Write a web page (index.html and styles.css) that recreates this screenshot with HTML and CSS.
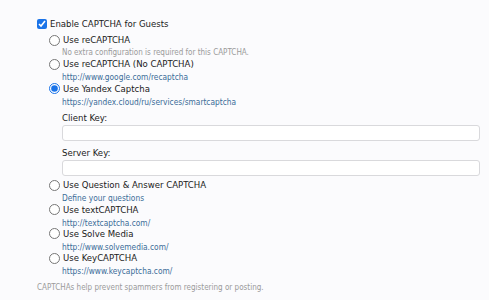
FILE: index.html
```html
<!DOCTYPE html>
<html lang="en">
<head>
  <meta charset="UTF-8">
  <title>CAPTCHA settings</title>
  <link rel="stylesheet" href="styles.css">
</head>
<body>
  <div class="captcha-settings">
    <label class="check-row">
      <input type="checkbox" checked> Enable CAPTCHA for Guests
    </label>

    <div class="options">
      <div class="option">
        <label class="option-label"><input type="radio" name="captcha"> Use reCAPTCHA</label>
        <div class="desc hint">No extra configuration is required for this CAPTCHA.</div>
      </div>
      <div class="option">
        <label class="option-label"><input type="radio" name="captcha"> Use reCAPTCHA (No CAPTCHA)</label>
        <div class="desc"><a href="#">http://www.google.com/recaptcha</a></div>
      </div>
      <div class="option">
        <label class="option-label"><input type="radio" name="captcha" checked> Use Yandex Captcha</label>
        <div class="desc"><a href="#">https://yandex.cloud/ru/services/smartcaptcha</a></div>
        <div class="keys">
          <label class="key-label">Client Key:</label>
          <input type="text" class="key-input">
          <label class="key-label second">Server Key:</label>
          <input type="text" class="key-input">
        </div>
      </div>
      <div class="option">
        <label class="option-label"><input type="radio" name="captcha"> Use Question &amp; Answer CAPTCHA</label>
        <div class="desc"><a href="#">Define your questions</a></div>
      </div>
      <div class="option">
        <label class="option-label"><input type="radio" name="captcha"> Use textCAPTCHA</label>
        <div class="desc"><a href="#">http://textcaptcha.com/</a></div>
      </div>
      <div class="option">
        <label class="option-label"><input type="radio" name="captcha"> Use Solve Media</label>
        <div class="desc"><a href="#">http://www.solvemedia.com/</a></div>
      </div>
      <div class="option">
        <label class="option-label"><input type="radio" name="captcha"> Use KeyCAPTCHA</label>
        <div class="desc"><a href="#">https://www.keycaptcha.com/</a></div>
      </div>
    </div>

    <div class="footer-hint">CAPTCHAs help prevent spammers from registering or posting.</div>
  </div>
</body>
</html>
```

FILE: styles.css
```css
* {
  box-sizing: border-box;
}

body {
  margin: 0;
  background-color: #fbfbfd;
  font-family: "DejaVu Sans Condensed", "DejaVu Sans", sans-serif;
  font-size: 9.5px;
  color: #1a1a1a;
}

.captcha-settings {
  padding: 17px 0 0 37px;
}

.check-row {
  display: flex;
  align-items: center;
  height: 14px;
  line-height: 14px;
}

.check-row input {
  width: 10px;
  height: 10px;
  margin: 0 3px 0 0;
  accent-color: #1a73e8;
}

.options {
  margin-top: 2px;
  padding-left: 12px;
}

.option {
  padding-bottom: 0.1px;
}

.option-label {
  display: flex;
  align-items: center;
  height: 14px;
  line-height: 14px;
}

.option-label input {
  width: 11px;
  height: 11px;
  margin: 0 3px 0 0;
  accent-color: #1a73e8;
}

.desc {
  padding: 2px 0 0 13px;
  line-height: 8px;
  height: 10.3px;
  font-size: 8px;
}

.desc a {
  color: #3a6c98;
  font-size: 8.3px;
  text-decoration: none;
}

.hint {
  color: #9a9a9a;
}

.keys {
  padding: 6px 9px 2px 13px;
}

.key-label {
  display: block;
  line-height: 12px;
}

.key-label.second {
  margin-top: 6px;
}

.key-input {
  display: block;
  width: 100%;
  height: 16px;
  margin-top: 1px;
  background: #fff;
  border: 1px solid #d9d9dc;
  border-radius: 3px;
}

.footer-hint {
  margin-top: 7px;
  line-height: 10px;
  font-size: 8px;
  color: #9a9a9a;
}
```
